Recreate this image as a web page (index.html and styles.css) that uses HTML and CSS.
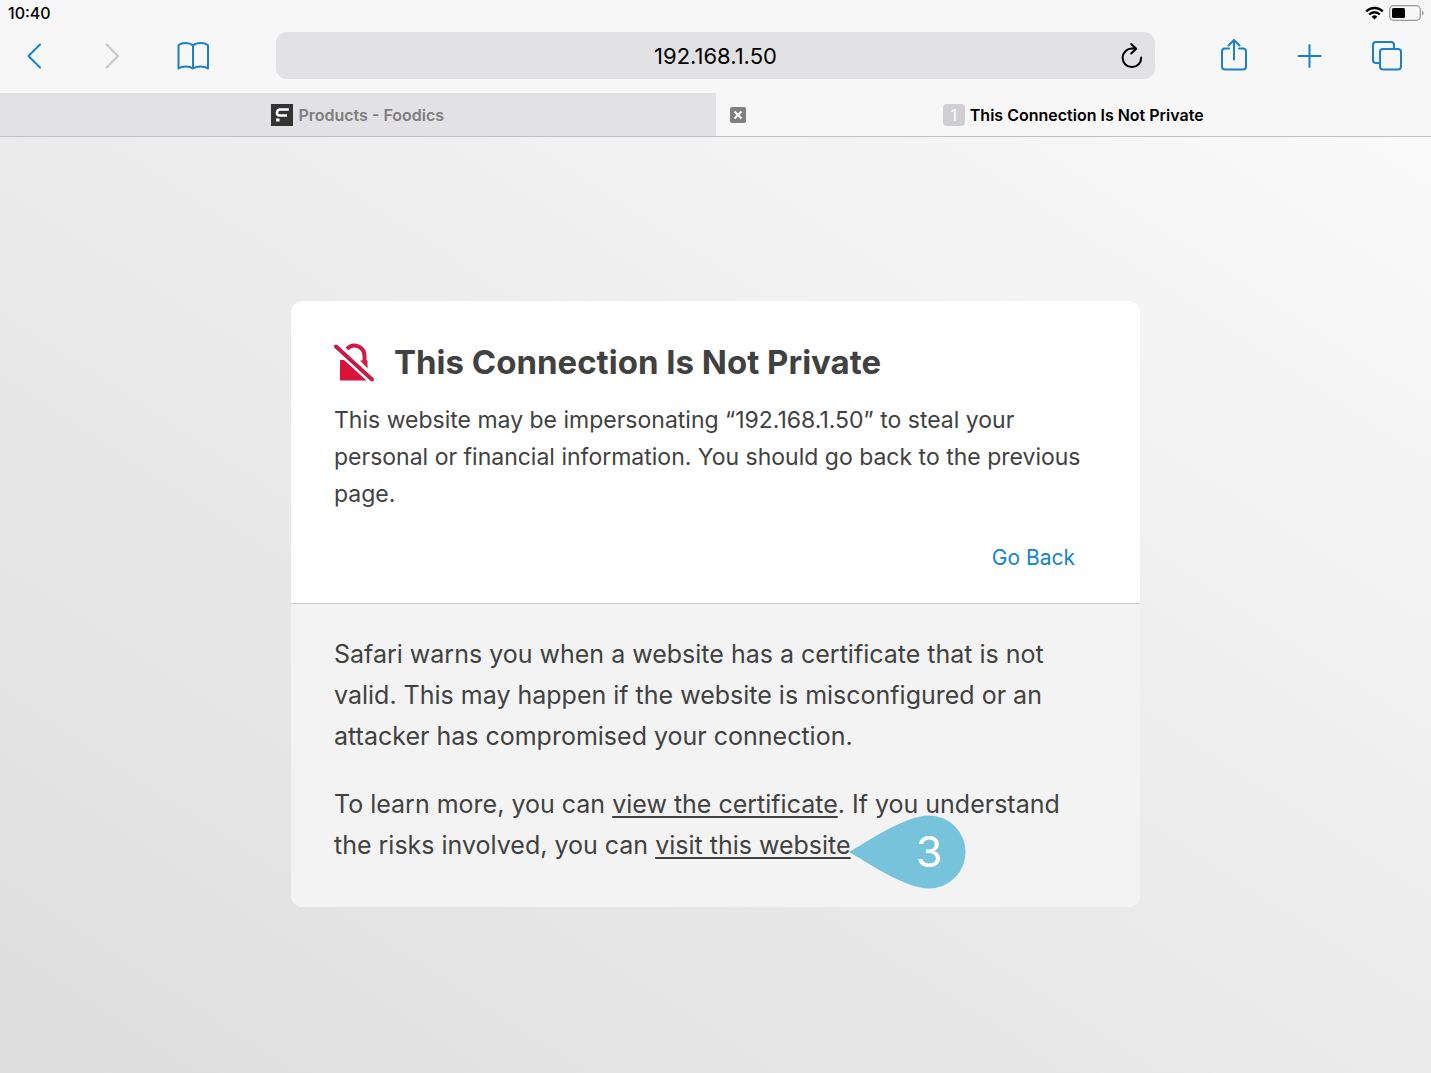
FILE: index.html
```html
<!DOCTYPE html>
<html lang="en">
<head>
    <meta charset="UTF-8">
    <title>This Connection Is Not Private</title>
    <link rel="stylesheet" href="styles.css">
</head>
<body>
    <header class="browser">
        <div class="status-bar">
            <span class="time">10:40</span>
            <div class="indicators">
                <svg width="19" height="14" viewBox="0 0 19 14" fill="none" stroke="#000" stroke-width="2.4">
                    <path d="M1.2 5.4a11.7 11.7 0 0 1 16.6 0"/>
                    <path d="M4.2 8.5a7.5 7.5 0 0 1 10.6 0"/>
                    <path d="M9.5 13.4L6.7 10.7a4 4 0 0 1 5.6 0z" fill="#000" stroke="none"/>
                </svg>
                <svg width="35" height="16" viewBox="0 0 35 16">
                    <rect x="0.7" y="0.7" width="30.6" height="14.6" rx="4" fill="none" stroke="#999" stroke-width="1.3"/>
                    <rect x="3" y="3" width="13" height="10" rx="1.5" fill="#000"/>
                    <path d="M33 5.5a2.7 2.7 0 0 1 0 5z" fill="#999"/>
                </svg>
            </div>
        </div>

        <div class="toolbar">
            <nav class="tools tools-left">
                <button type="button" aria-label="Back">
                    <svg width="34" height="34" viewBox="0 0 34 34"><path d="M23 5.500L11.500 17 23 28.500"/></svg>
                </button>
                <button type="button" aria-label="Forward" disabled>
                    <svg width="34" height="34" viewBox="0 0 34 34"><path d="M10.500 5.500L22 17 10.500 28.500"/></svg>
                </button>
                <button type="button" aria-label="Bookmarks">
                    <svg width="34" height="34" viewBox="0 0 34 34"><path d="M18 6.500C14.500 3.200 7 3.200 3.500 6.200V29.500C7 26.800 14.500 26.800 18 29.500 21.500 26.800 29.500 26.800 33 29.500V6.200C29.500 3.200 21.500 3.200 18 6.500V29.500"/></svg>
                </button>
            </nav>
            <div class="address-bar">
                <input type="text" value="192.168.1.50" aria-label="Address">
                <button type="button" class="reload" aria-label="Reload">
                    <svg width="24" height="28" viewBox="0 0 24 28"><path d="M21.200 15.500A9.300 9.300 0 1 1 12 6.500H16M11.200 2L16.200 6.700 11.200 11.500"/></svg>
                </button>
            </div>
            <nav class="tools tools-right">
                <button type="button" aria-label="Share">
                    <svg width="34" height="34" viewBox="0 0 34 34"><path d="M12 9.500H8a3 3 0 0 0-3 3V27.500a3 3 0 0 0 3 3H26a3 3 0 0 0 3-3V12.500a3 3 0 0 0-3-3H22M17 20.500V1M11.500 6.500L17 1 22.500 6.500"/></svg>
                </button>
                <button type="button" aria-label="New tab">
                    <svg width="34" height="34" viewBox="0 0 34 34"><path d="M16.500 6V28M5.500 17H27.500"/></svg>
                </button>
                <button type="button" aria-label="Show tabs">
                    <svg width="34" height="34" viewBox="0 0 34 34"><rect x="11" y="10" width="21" height="20.500" rx="3"/><path d="M11 24H7a3 3 0 0 1-3-3V6a3 3 0 0 1 3-3H22a3 3 0 0 1 3 3V10"/></svg>
                </button>
            </nav>
        </div>

        <div class="tabs">
            <a href="#" class="tab">
                <svg width="22" height="22" viewBox="0 0 22 22">
                    <rect width="22" height="22" fill="#333"/>
                    <path d="M18 5.500H9A3 3 0 0 0 6 8.500V9A2.500 2.500 0 0 0 8.500 11.500H16" fill="none" stroke="#fff" stroke-width="2.6"/>
                    <rect x="5" y="14.500" width="3.500" height="3" fill="#fff"/>
                </svg>
                Products - Foodics
            </a>
            <div class="tab active">
                <button type="button" class="close-tab" aria-label="Close tab">
                    <svg width="16" height="16" viewBox="0 0 16 16"><path d="M4.500 4.500L11.500 11.500M11.500 4.500L4.500 11.500"/></svg>
                </button>
                <span class="favicon">1</span>
                This Connection Is Not Private
            </div>
        </div>
    </header>

    <main class="page">
        <div class="card">
            <section class="warning">
                <div class="title">
                    <svg width="40" height="40" viewBox="0 0 40 40">
                        <path d="M6 38.500V18H10L32.500 38.500z" fill="#d9123b"/>
                        <path d="M13 7C19 0.500 30.500 4 30.500 14V19" fill="none" stroke="#cf1a43" stroke-width="4"/>
                        <path d="M26 18.500H33.500V26.500z" fill="#cf1a43"/>
                        <path d="M2 4L38 38" stroke="#fff" stroke-width="7"/>
                        <path d="M2 4.500L38 37.500" stroke="#c41c43" stroke-width="4" stroke-linecap="round"/>
                    </svg>
                    <h1>This Connection Is Not Private</h1>
                </div>
                <p>This website may be impersonating “192.168.1.50” to steal your personal or financial information. You should go back to the previous page.</p>
                <div class="actions">
                    <button type="button" class="go-back">Go Back</button>
                </div>
            </section>
            <section class="details">
                <p>Safari warns you when a website has a certificate that is not valid. This may happen if the website is misconfigured or an attacker has compromised your connection.</p>
                <p>To learn more, you can <a href="#">view the certificate</a>. If you understand the risks involved, you can <span class="step-anchor"><a href="#">visit this website</a>.
                    <span class="step">
                        <svg width="117" height="74" viewBox="0 0 117 74"><path d="M0 37C18 27 56 0.500 80 0.500A36.500 36.500 0 0 1 80 73.500C56 73.500 18 47 0 37z" fill="#78c3dc"/></svg>
                        <span class="step-number">3</span>
                    </span></span></p>
            </section>
        </div>
    </main>
</body>
</html>
```

FILE: styles.css
```css
* {
    box-sizing: border-box;
}
body {
    margin: 0;
    min-height: 100vh;
    display: flex;
    flex-direction: column;
    font-family: Inter, "Liberation Sans", sans-serif;
    color: #414141;
    background-color: #e9e9eb;
}
button {
    padding: 0;
    border: none;
    background: none;
    font-family: inherit;
    cursor: pointer;
}
svg {
    display: block;
}
.browser {
    background-color: #f7f7f7;
    border-bottom: 1px solid #c0c0c2;
}
.status-bar {
    display: flex;
    justify-content: space-between;
    align-items: center;
    height: 26px;
    padding: 0 7px 0 8px;
    color: #000;
}
.time {
    font-size: 16px;
    font-weight: 500;
}
.indicators {
    display: flex;
    align-items: center;
    gap: 5px;
}
.toolbar {
    display: flex;
    align-items: center;
    height: 67px;
    padding-bottom: 8px;
}
.tools {
    display: flex;
    flex: 0 0 276px;
}
.tools-left {
    gap: 45px;
    padding-left: 17px;
}
.tools-right {
    justify-content: flex-end;
    gap: 42px;
    padding-right: 28px;
}
.tools svg {
    fill: none;
    stroke: #1a7fce;
    stroke-width: 2;
    stroke-linecap: round;
    stroke-linejoin: round;
}
.tools button:disabled svg {
    stroke: #c8c8ca;
}
.address-bar {
    position: relative;
    flex: 1;
}
.address-bar input {
    display: block;
    width: 100%;
    height: 47px;
    border: none;
    border-radius: 11px;
    background-color: #e2e2e4;
    color: #000;
    font-family: inherit;
    font-size: 22px;
    text-align: center;
}
.reload {
    position: absolute;
    top: 10px;
    right: 11px;
}
.reload svg {
    fill: none;
    stroke: #000;
    stroke-width: 2;
    stroke-linecap: round;
    stroke-linejoin: round;
}
.tabs {
    display: flex;
    height: 43px;
}
.tab {
    position: relative;
    flex: 1;
    display: flex;
    justify-content: center;
    align-items: center;
    gap: 5px;
    background-color: #e2e2e4;
    color: #7e7e80;
    font-size: 16px;
    font-weight: 600;
    text-decoration: none;
}
.tab.active {
    background-color: #f7f7f7;
    color: #000;
}
.close-tab {
    position: absolute;
    left: 14px;
    border-radius: 2px;
    background-color: #808080;
}
.close-tab svg {
    stroke: #fff;
    stroke-width: 2;
}
.favicon {
    width: 22px;
    line-height: 22px;
    border-radius: 4px;
    background-color: #cfcfd3;
    color: #fff;
    font-weight: 400;
    text-align: center;
}
.page {
    flex: 1;
    display: flex;
    justify-content: center;
    align-items: center;
    padding: 20px 20px 22px;
    background: linear-gradient(to top right, #dedede, #ebebec 50%, #fafafb);
}
.card {
    width: 849px;
    max-width: 100%;
    border-radius: 12px;
    background-color: #fff;
}
.warning {
    padding: 39px 43px 26px;
    border-bottom: 1px solid #cfcfcf;
}
.title {
    display: flex;
    align-items: center;
    gap: 20px;
    margin-bottom: 18px;
}
h1 {
    margin: 0;
    font-size: 33px;
    line-height: 44px;
    font-weight: 700;
}
p {
    margin: 0;
}
.warning p {
    font-size: 23px;
    line-height: 37px;
}
.actions {
    display: flex;
    justify-content: flex-end;
    margin-top: 26px;
    padding-right: 22px;
}
.go-back {
    color: #1582cc;
    font-size: 21px;
    line-height: 38px;
}
.details {
    padding: 30px 43px 41px;
    border-radius: 0 0 12px 12px;
    background-color: #f3f3f3;
    font-size: 25px;
    line-height: 41px;
}
.details p + p {
    margin-top: 27px;
}
.details a {
    color: inherit;
    text-decoration-thickness: 2px;
    text-underline-offset: 3px;
}
.step-anchor {
    position: relative;
}
/* numbered marker pointing at the link */
.step {
    position: absolute;
    left: 100%;
    top: 50%;
    margin-left: -9px;
    transform: translateY(-30px);
}
.step-number {
    position: absolute;
    top: 16px;
    left: 67px;
    color: #fff;
    font-size: 43px;
    line-height: 40px;
}
```
